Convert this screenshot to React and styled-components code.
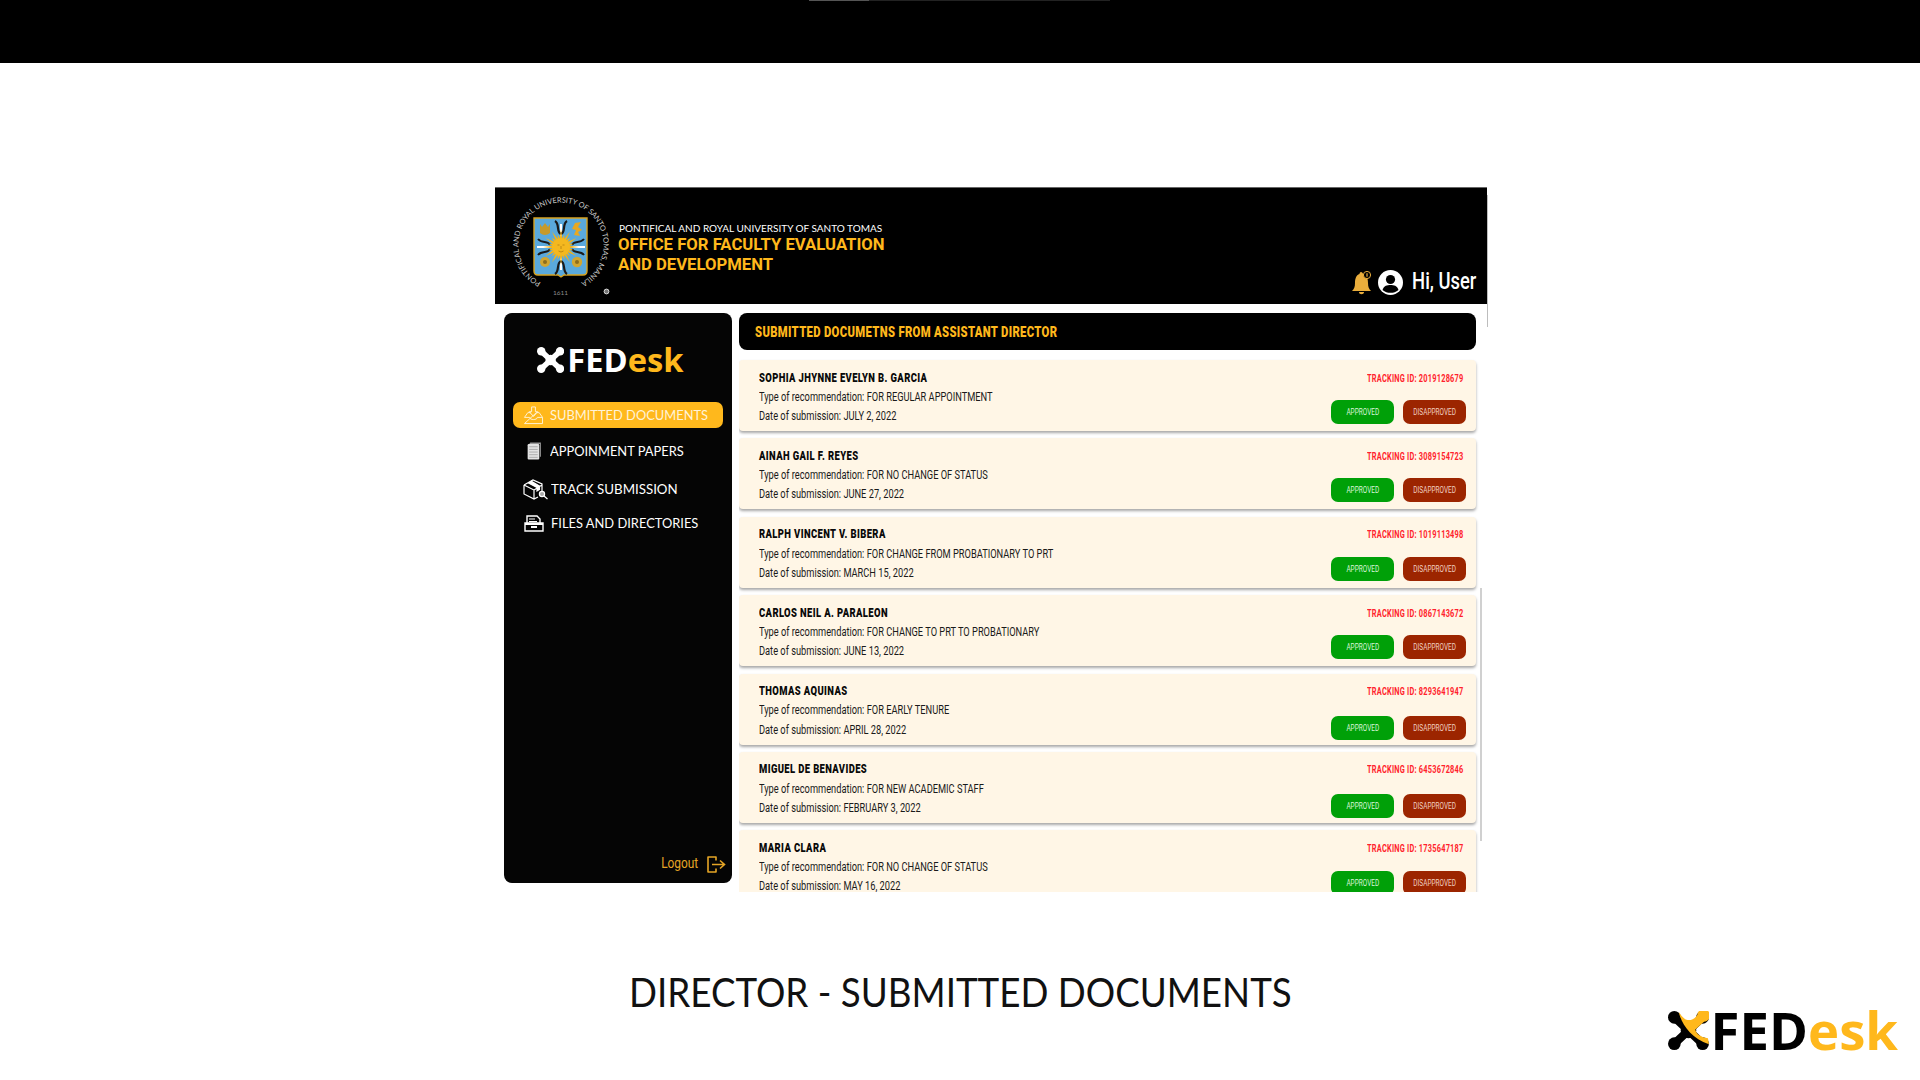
import React from 'react';
import styled, { createGlobalStyle } from 'styled-components';

const GlobalStyle = createGlobalStyle`
  * { box-sizing: border-box; }
  html, body { margin: 0; padding: 0; background: #fff; overflow: hidden; }
  body { font-family: "Roboto", "Liberation Sans", sans-serif; }
`;

const Page = styled.div`
  width: 1920px;
  height: 1080px;
  display: flex;
  flex-direction: column;
  background: #fff;
`;

const TopBar = styled.div`
  height: 63px;
  background: #000;
  flex: none;
  display: flex;
  padding-left: 809px;
`;

const Strip = styled.div`
  width: 301px;
  height: 1px;
  background: linear-gradient(to right, #555 60px, #222 60px);
`;

const Frame = styled.div`
  width: 992px;
  height: 705px;
  margin: 124px 0 0 495px;
  flex: none;
  position: relative;
  display: flex;
  flex-direction: column;
`;

const FrameScroll = styled.div`
  position: absolute;
  right: -1px;
  top: 8px;
  width: 1px;
  height: 132px;
  background: #bdbdbd;
`;

const Header = styled.header`
  height: 117px;
  flex: none;
  background: #000;
  border-top: 1px solid #666;
  display: flex;
  align-items: flex-start;
  padding: 8px 11px 0 14px;
`;

const HeaderTitles = styled.div`
  margin: 26px 0 0 7px;
  display: flex;
  flex-direction: column;
`;

const UniName = styled.div`
  font: 400 10px/13px "Lato", sans-serif;
  color: #fff;
  margin: 0 0 0 1px;
  white-space: nowrap;
`;

const OfficeName = styled.div`
  font: 700 16.7px/19.5px "Roboto", sans-serif;
  color: #ffb81c;
  white-space: nowrap;
`;

const UserBox = styled.div`
  margin: 73px 0 0 auto;
  display: flex;
  align-items: center;
  color: #fff;
`;

const BellWrap = styled.div`
  width: 21px;
  height: 26px;
  margin-right: 6px;
`;

const HiUser = styled.span`
  font: 500 23px/26px "Roboto", sans-serif;
  margin-left: -7px;
  display: inline-block;
  transform: scaleX(0.8);
  transform-origin: right center;
  white-space: nowrap;
`;

const Body = styled.div`
  flex: 1;
  min-height: 0;
  display: flex;
  padding: 9px 5px 0 9px;
  gap: 7px;
  background: #fff;
`;

const Sidebar = styled.aside`
  width: 228px;
  height: 570px;
  flex: none;
  background: #050505;
  border-radius: 8px;
  display: flex;
  flex-direction: column;
  padding: 30px 9px 0;
  color: #fff;
`;

const SideLogo = styled.div`
  margin: 1px 0 0 24px;
  height: 29px;
`;

const LogoRow = styled.div`
  display: flex;
  align-items: center;
  gap: ${p => p.$gap}px;
  font-family: "Open Sans", sans-serif;
  font-weight: 700;
  line-height: 1;
  white-space: nowrap;
`;

const LogoWord = styled.span`
  font-size: ${p => p.$size}px;
`;

const LogoPart = styled.span`
  color: ${p => p.$color};
`;

const Menu = styled.nav`
  margin-top: 29px;
  display: flex;
  flex-direction: column;
`;

const MenuItem = styled.a`
  display: flex;
  align-items: center;
  height: 26px;
  border-radius: 7px;
  margin-bottom: ${p => p.$gap}px;
  padding-left: ${p => p.$pad}px;
  background: ${p => (p.$active ? '#ffb81c' : 'transparent')};
  font: 400 14px/26px "Lato", sans-serif;
  color: ${p => (p.$active ? '#fff3d8' : '#fff')};
  white-space: nowrap;
`;

const MenuIcon = styled.span`
  width: ${p => p.$w}px;
  display: flex;
  flex: none;
`;

const Logout = styled.div`
  margin: auto -3px 9px 0;
  display: flex;
  justify-content: flex-end;
  align-items: center;
  gap: 9px;
  color: #e5a526;
`;

const LogoutText = styled.span`
  font: 400 14.5px/20px "Roboto", sans-serif;
  display: inline-block;
  transform: scaleX(0.82);
  transform-origin: right center;
`;

const Main = styled.main`
  flex: 1;
  min-width: 0;
  display: flex;
  flex-direction: column;
  height: 579px;
  overflow: hidden;
  position: relative;
  padding-right: 6px;
`;

const MainHead = styled.div`
  height: 37px;
  flex: none;
  background: #000;
  border-radius: 8px;
  display: flex;
  align-items: center;
  padding-left: 16px;
  margin-bottom: 10px;
`;

const Condensed = styled.span`
  display: inline-block;
  transform: scaleX(${p => p.$x || 0.72});
  transform-origin: ${p => p.$origin || 'left'} center;
  white-space: nowrap;
`;

const MainTitle = styled.h2`
  margin: 0;
  font: 900 14px/18px "Roboto", sans-serif;
  color: #ffb81c;
  letter-spacing: 0.4px;
`;

const List = styled.div`
  display: flex;
  flex-direction: column;
  gap: 7.4px;
`;

const Card = styled.article`
  height: 71px;
  flex: none;
  background: #fff6e6;
  border-radius: 4px;
  box-shadow: 0 2px 3px rgba(0, 0, 0, 0.35);
  display: flex;
  justify-content: space-between;
  padding: 10.5px 10px 0 20px;
`;

const CardInfo = styled.div`
  display: flex;
  flex-direction: column;
  gap: 4.3px;
  min-width: 0;
`;

const Name = styled.div`
  font: 900 12px/15px "Roboto", sans-serif;
  color: #0a0a0a;
  letter-spacing: 0.5px;
`;

const Line = styled.div`
  font: 400 12px/15px "Roboto", sans-serif;
  color: #1a1a1a;
`;

const CardSide = styled.div`
  width: 135px;
  flex: none;
  display: flex;
  flex-direction: column;
`;

const Tracking = styled.div`
  font: 700 10px/15px "Roboto", sans-serif;
  color: #ff1f2d;
  margin-left: 36px;
  letter-spacing: 0.3px;
`;

const Actions = styled.div`
  display: flex;
  gap: 9px;
  margin-top: ${p => p.$top}px;
`;

const ActionButton = styled.button`
  width: 63px;
  height: 24px;
  border: 0;
  padding: 0;
  border-radius: 7px;
  background: ${p => (p.$no ? '#9c2500' : '#00a008')};
  color: ${p => (p.$no ? '#f0cfc0' : '#d9f5d9')};
  font: 400 9px/24px "Roboto", sans-serif;
  overflow: hidden;
`;

const ScrollThumb = styled.div`
  position: absolute;
  right: 0;
  top: 275px;
  width: 2px;
  height: 253px;
  background: #d0d0d0;
`;

const Footer = styled.footer`
  flex: 1;
  display: grid;
  grid-template-columns: 1fr auto 1fr;
  padding: 0 0 23px;
`;

const PageTitle = styled.h1`
  grid-column: 2;
  margin: 76px 0 0;
  font: 400 41px/48px "Lato", sans-serif;
  color: #111;
  white-space: nowrap;
  width: 662px;
`;

const FootLogo = styled.div`
  justify-self: end;
  align-self: end;
  margin-right: 22px;
`;

const people = [
  ['SOPHIA JHYNNE EVELYN B. GARCIA', 'FOR REGULAR APPOINTMENT', 'JULY 2, 2022', '2019128679', 14.5],
  ['AINAH GAIL F. REYES', 'FOR NO CHANGE OF STATUS', 'JUNE 27, 2022', '3089154723', 14.5],
  ['RALPH VINCENT V. BIBERA', 'FOR CHANGE FROM PROBATIONARY TO PRT', 'MARCH 15, 2022', '1019113498', 14.5],
  ['CARLOS NEIL A. PARALEON', 'FOR CHANGE TO PRT TO PROBATIONARY', 'JUNE 13, 2022', '0867143672', 14.5],
  ['THOMAS AQUINAS', 'FOR EARLY TENURE', 'APRIL 28, 2022', '8293641947', 17],
  ['MIGUEL DE BENAVIDES', 'FOR NEW ACADEMIC STAFF', 'FEBRUARY 3, 2022', '6453672846', 17],
  ['MARIA CLARA', 'FOR NO CHANGE OF STATUS', 'MAY 16, 2022', '1735647187', 15.5],
];

// the four lobed X from the logo
const XMark = ({ size, base, accent }) => (
  <svg width={size * 1.05} height={size} viewBox="0 0 42 40">
    <path d="M6.5 6.5 L35.5 33.5 M35.5 6.5 L6.5 33.5" fill="none" stroke={base} strokeWidth="8.5" />
    <circle cx="21" cy="20" r="8" fill={base} />
    <circle cx="6.5" cy="6.5" r="6.5" fill={base} />
    <circle cx="35.5" cy="6.5" r="6.5" fill={base} />
    <circle cx="6.5" cy="33.5" r="6.5" fill={base} />
    <circle cx="35.5" cy="33.5" r="6.5" fill={base} />
    {accent && (
      <path
        d="M11 1 C14 14 24 28 42 34 L41 28 C34 27 29 24 28 19 L37 11 A6.5 6.5 0 1 0 30 4 C27 9 22 10 19 9 C16 8 14 5 11 1 Z"
        fill={accent}
      />
    )}
  </svg>
);

const SUN_RAYS = Array.from({ length: 24 }).map((_, i) => {
  const a = (i * Math.PI) / 12;
  const r = i % 2 ? 13 : 18;
  const side = 0.16;
  const p = (ang, rad) => `${52 + Math.cos(ang) * rad},${51 + Math.sin(ang) * rad}`;
  return `${p(a - side, 8)} ${p(a, r)} ${p(a + side, 8)}`;
});

const Seal = () => (
  <svg width="102" height="108" viewBox="0 0 102 108">
    <defs>
      <path id="sealRing" d="M32 86.5 A42.5 42.5 0 1 1 72 86.5" fill="none" />
    </defs>
    <text fill="#c8c8c8" fontSize="7.4" fontFamily="Lato, sans-serif">
      <textPath href="#sealRing" textLength="225">PONTIFICAL AND ROYAL UNIVERSITY OF SANTO TOMAS, MANILA</textPath>
    </text>
    <text x="44" y="99" fill="#8d8d8d" fontSize="6.5" fontFamily="Lato, sans-serif">1611</text>
    <circle cx="97.5" cy="95.5" r="2.4" fill="#777" stroke="#ddd" strokeWidth="1" />
    <path d="M25 22 H78 V75 Q78 79 74 79 H55 L52 81 L49 79 H29 Q25 79 25 75 Z" fill="#5aa9dc" stroke="#d7a321" strokeWidth="1.4" />
    <path d="M28 51 H76 M52 28 V74" stroke="#fff" strokeWidth="2" />
    <path d="M46 25 C51 28 47 36 52 38 M58 25 C53 28 57 36 52 38 M46 78 C51 75 47 67 52 65 M58 78 C53 75 57 67 52 65" stroke="#1a1a1a" strokeWidth="2.2" fill="none" />
    <path d="M29 43 C33 48 39 44 41 49 M75 43 C71 48 65 44 63 49 M29 59 C33 54 39 58 41 53 M75 59 C71 54 65 58 63 53" stroke="#1a1a1a" strokeWidth="2" fill="none" />
    <g fill="#f0b21c">
      {SUN_RAYS.map(points => <polygon key={points} points={points} />)}
    </g>
    <circle cx="52" cy="51" r="9" fill="#f4b81f" />
    <path d="M48.5 49 H50.5 M53.5 49 H55.5 M52 50 V53 M49.5 55 Q52 57 54.5 55" stroke="#a87510" strokeWidth="0.7" fill="none" />
    <path d="M31 28 L33 31 L36 27 L39 31 L41 28 V37 Q36 41 31 37 Z" fill="#c79a2a" />
    <path d="M66 27 L72 26 L69 31 L73 34 L69 36 L71 40 L65 39 L67 34 L63 33 Z" fill="#e8a821" />
    <circle cx="36" cy="66" r="5" fill="#d1a630" />
    <circle cx="36" cy="66" r="2" fill="#8c6d1d" />
    <circle cx="68" cy="66" r="5.2" fill="#d1a630" />
    <circle cx="68" cy="66" r="2" fill="#8c6d1d" />
  </svg>
);

const InboxIcon = () => (
  <svg width="21" height="19" viewBox="0 0 22 20" fill="none" stroke="#fff3d8" strokeWidth="1">
    <path d="M1.5 12 L5 7 H8 M14 7 H17 L20.5 12 V18.5 H1.5 Z" />
    <path d="M1.5 12 H7 C7 15 15 15 15 12 H20.5" />
    <path d="M9 1 H13 V6 H15.5 L11 11 L6.5 6 H9 Z" />
  </svg>
);

const PapersIcon = () => (
  <svg width="14" height="18" viewBox="0 0 13 17">
    <path d="M2 2 L3 0.5 H13 V14 H12 V2 Z" fill="#999" />
    <rect x="0.5" y="2" width="11" height="14.5" rx="1" fill="#e3e3e3" />
    <path d="M2 4.5 H10 M2 7 H10 M2 9.5 H10 M2 12 H10 M2 14.5 H10" stroke="#999" strokeWidth="0.7" />
  </svg>
);

const BoxIcon = () => (
  <svg width="25" height="21" viewBox="0 0 25 21" fill="none" stroke="#fff" strokeWidth="1.2">
    <path d="M1 6 L10 1 L19 5 L19 13 M1 6 V15 L11 20 L15 18 M1 6 L11 11 V20 M11 11 L19 6" />
    <path d="M5 3.7 L14 8.4 V12 L16.5 10.5 V7 L8 2" fill="#fff" />
    <circle cx="19" cy="15" r="2.6" fill="#aaa" />
    <path d="M21 17 L24.5 20" />
  </svg>
);

const DrawerIcon = () => (
  <svg width="20" height="17" viewBox="0 0 20 17" fill="none" stroke="#fff" strokeWidth="1.4">
    <path d="M3 8 V1 H13 L16 4 V8" />
    <path d="M5 4 H11 M5 6.5 H13" strokeWidth="1" />
    <path d="M1 8 H19 V16 H1 Z" />
    <path d="M1 9 H19" strokeWidth="2" />
    <path d="M7 12 H13" strokeWidth="2" />
  </svg>
);

const Bell = () => (
  <svg width="21" height="26" viewBox="0 0 21 26">
    <path d="M10 3 C11 3 12 4 12 5 C16 6 17 10 17 14 C17 18 18 20 20 22 H1 C3 20 4 18 4 14 C4 10 5 6 8.5 5 C8.5 4 9 3 10 3 Z" fill="#eaae3c" />
    <path d="M8 23 H13 C13 26 8 26 8 23 Z" fill="#eaae3c" />
    <circle cx="16" cy="6" r="3.6" fill="#000" stroke="#eaae3c" strokeWidth="1" />
    <path d="M16 4.2 V7.8" stroke="#eaae3c" strokeWidth="1.2" />
  </svg>
);

const UserIcon = () => (
  <svg width="25" height="25" viewBox="0 0 25 25">
    <circle cx="12.5" cy="12.5" r="12.5" fill="#fff" />
    <circle cx="12.5" cy="9.5" r="4.6" fill="#000" />
    <path d="M4.5 20 C6 15.5 9 15 12.5 15 C16 15 19 15.5 20.5 20 C18 22 15.5 22.8 12.5 22.8 C9.5 22.8 7 22 4.5 20 Z" fill="#000" />
  </svg>
);

const LogoutIcon = () => (
  <svg width="19" height="17" viewBox="0 0 19 17" fill="none" stroke="#e5a526" strokeWidth="1.6">
    <path d="M9 4.5 V1 H1 V16 H9 V12.5" strokeLinejoin="round" />
    <path d="M5 8.5 H17 M13 4.5 L17.5 8.5 L13 12.5" />
  </svg>
);

const App = () => (
  <Page>
    <GlobalStyle />
    <TopBar><Strip /></TopBar>
    <Frame>
      <Header>
        <Seal />
        <HeaderTitles>
          <UniName>PONTIFICAL AND ROYAL UNIVERSITY OF SANTO TOMAS</UniName>
          <OfficeName>OFFICE FOR FACULTY EVALUATION</OfficeName>
          <OfficeName>AND DEVELOPMENT</OfficeName>
        </HeaderTitles>
        <UserBox>
          <BellWrap><Bell /></BellWrap>
          <UserIcon />
          <HiUser>Hi, User</HiUser>
        </UserBox>
      </Header>
      <Body>
        <Sidebar>
          <SideLogo>
            <LogoRow $gap={3}>
              <XMark size={26} base="#fff" />
              <LogoWord $size={32.7}>
                <LogoPart $color="#fff">FED</LogoPart>
                <LogoPart $color="#ffb81c">esk</LogoPart>
              </LogoWord>
            </LogoRow>
          </SideLogo>
          <Menu>
            <MenuItem $active $gap={10} $pad={10}><MenuIcon $w={27}><InboxIcon /></MenuIcon><Condensed $x={0.92}>SUBMITTED DOCUMENTS</Condensed></MenuItem>
            <MenuItem $gap={12} $pad={14}><MenuIcon $w={23}><PapersIcon /></MenuIcon><Condensed $x={0.92}>APPOINMENT PAPERS</Condensed></MenuItem>
            <MenuItem $gap={8} $pad={10}><MenuIcon $w={28}><BoxIcon /></MenuIcon><Condensed $x={0.95}>TRACK SUBMISSION</Condensed></MenuItem>
            <MenuItem $gap={0} $pad={11}><MenuIcon $w={27}><DrawerIcon /></MenuIcon><Condensed $x={0.92}>FILES AND DIRECTORIES</Condensed></MenuItem>
          </Menu>
          <Logout>
            <LogoutText>Logout</LogoutText>
            <LogoutIcon />
          </Logout>
        </Sidebar>
        <Main>
          <MainHead>
            <MainTitle><Condensed $x={0.806}>SUBMITTED DOCUMETNS FROM ASSISTANT DIRECTOR</Condensed></MainTitle>
          </MainHead>
          <List>
            {people.map(([name, type, date, id, btnTop]) => (
              <Card key={id}>
                <CardInfo>
                  <Name><Condensed $x={0.785}>{name}</Condensed></Name>
                  <Line><Condensed $x={0.772}>Type of recommendation: {type}</Condensed></Line>
                  <Line><Condensed $x={0.772}>Date of submission: {date}</Condensed></Line>
                </CardInfo>
                <CardSide>
                  <Tracking><Condensed $x={0.74}>TRACKING ID: {id}</Condensed></Tracking>
                  <Actions $top={btnTop}>
                    <ActionButton><Condensed $x={0.72} $origin="center">APPROVED</Condensed></ActionButton>
                    <ActionButton $no><Condensed $x={0.72} $origin="center">DISAPPROVED</Condensed></ActionButton>
                  </Actions>
                </CardSide>
              </Card>
            ))}
          </List>
          <ScrollThumb />
        </Main>
      </Body>
      <FrameScroll />
    </Frame>
    <Footer>
      <PageTitle><Condensed $x={0.896}>DIRECTOR - SUBMITTED DOCUMENTS</Condensed></PageTitle>
      <FootLogo>
        <LogoRow $gap={2}>
          <XMark size={39} base="#000" accent="#ffb81c" />
          <LogoWord $size={52.7}>
            <LogoPart $color="#000">FED</LogoPart>
            <LogoPart $color="#ffb81c">esk</LogoPart>
          </LogoWord>
        </LogoRow>
      </FootLogo>
    </Footer>
  </Page>
);

export default App;
